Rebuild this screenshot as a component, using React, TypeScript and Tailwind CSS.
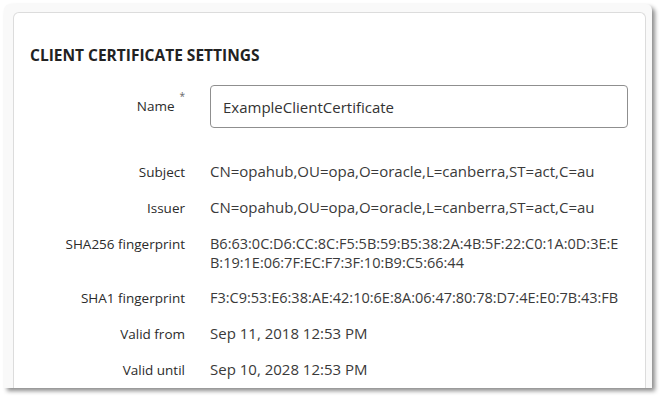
export default function App() {
  const rows: { label: string; lines: string[]; hex?: boolean }[] = [
    { label: "Subject", lines: ["CN=opahub,OU=opa,O=oracle,L=canberra,ST=act,C=au"] },
    { label: "Issuer", lines: ["CN=opahub,OU=opa,O=oracle,L=canberra,ST=act,C=au"] },
    {
      label: "SHA256 fingerprint",
      lines: ["B6:63:0C:D6:CC:8C:F5:5B:59:B5:38:2A:4B:5F:22:C0:1A:0D:3E:E", "B:19:1E:06:7F:EC:F7:3F:10:B9:C5:66:44"],
      hex: true,
    },
    { label: "SHA1 fingerprint", lines: ["F3:C9:53:E6:38:AE:42:10:6E:8A:06:47:80:78:D7:4E:E0:7B:43:FB"], hex: true },
    { label: "Valid from", lines: ["Sep 11, 2018 12:53 PM"] },
    { label: "Valid until", lines: ["Sep 10, 2028 12:53 PM"] },
  ];

  return (
    <div className="w-[663px] h-[398px] bg-white pl-1 pt-1 font-['Open_Sans',sans-serif] text-[#2b2b2b]">
      <div className="w-[648px] h-[384px] bg-[#f9f9f9] rounded-t-md shadow-[3px_3px_4px_rgba(0,0,0,0.45)] pl-[9px] pr-[6px] pt-2 overflow-hidden">
        <div className="h-full bg-white border border-b-0 border-[#dcdcdc] rounded-t-md pt-8 pl-4 pr-[17px]">
          <h2 className="text-[15.5px] leading-5 font-bold text-[#222]">CLIENT CERTIFICATE SETTINGS</h2>

          <div className="flex items-center mt-5">
            <div className="w-[155px] shrink-0 text-right text-[13.5px] font-medium">
              Name<sup className="ml-[5px] text-[10px] text-[#666] align-[6px]">*</sup>
            </div>
            <input
              readOnly
              value="ExampleClientCertificate"
              className="ml-[25px] w-[418px] h-[43px] rounded border border-[#8f8f8f] px-3 text-[15px] text-[#333] outline-none"
            />
          </div>

          <div className="flex flex-col gap-4 mt-[34px]">
            {rows.map((r) => (
              <div key={r.label} className="flex items-start">
                <div className="w-[155px] shrink-0 text-right text-[13.5px] leading-5 font-medium">{r.label}</div>
                <div className={`ml-[25px] leading-[19px] text-[#3a3a3a] ${r.hex ? "text-[14.5px]" : "text-[15px]"}`}>
                  {r.lines.map((l) => (
                    <div key={l}>{l}</div>
                  ))}
                </div>
              </div>
            ))}
          </div>
        </div>
      </div>
    </div>
  );
}
